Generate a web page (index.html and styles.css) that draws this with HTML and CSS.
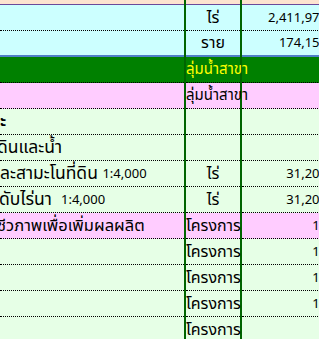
FILE: index.html
```html
<!DOCTYPE html>
<html lang="th">
<head>
<meta charset="utf-8">
<title>ตารางโครงการ</title>
<link rel="stylesheet" href="styles.css">
</head>
<body>
<div class="sheet">
  <div class="row r-top">
    <div class="cell c1"></div><div class="cell c2"></div><div class="cell c3"></div>
  </div>
  <div class="row r-cyan">
    <div class="cell c1"></div><div class="cell c2">ไร่</div><div class="cell c3">2,411,975</div>
  </div>
  <div class="row r-cyan r-cyan-last">
    <div class="cell c1"></div><div class="cell c2">ราย</div><div class="cell c3">174,150</div>
  </div>
  <div class="row r-green">
    <div class="cell c1"></div><div class="cell c2 left basin">ลุ่มน้ำสาขา</div><div class="cell c3"></div>
  </div>
  <div class="row r-pink">
    <div class="cell c1"></div><div class="cell c2 left basin">ลุ่มน้ำสาขา</div><div class="cell c3"></div>
  </div>
  <div class="row r-lite">
    <div class="cell c1 bold">ะ</div><div class="cell c2"></div><div class="cell c3"></div>
  </div>
  <div class="row r-lite">
    <div class="cell c1"><span class="cut">ดินและน้ำ</span></div><div class="cell c2"></div><div class="cell c3"></div>
  </div>
  <div class="row r-lite">
    <div class="cell c1">ละสามะโนที่ดิน&nbsp;<span class="num">1:4,000</span></div><div class="cell c2">ไร่</div><div class="cell c3">31,200</div>
  </div>
  <div class="row r-lite">
    <div class="cell c1"><span class="cut-sm">ดับไร่นา</span>&nbsp;&nbsp;<span class="num">1:4,000</span></div><div class="cell c2">ไร่</div><div class="cell c3">31,200</div>
  </div>
  <div class="row r-pink">
    <div class="cell c1 narrow"><span class="cut">ชีวภาพเพื่อเพิ่มผลผลิต</span></div><div class="cell c2 left">โครงการ</div><div class="cell c3">10</div>
  </div>
  <div class="row r-lite">
    <div class="cell c1"></div><div class="cell c2 left">โครงการ</div><div class="cell c3">10</div>
  </div>
  <div class="row r-lite">
    <div class="cell c1"></div><div class="cell c2 left">โครงการ</div><div class="cell c3">10</div>
  </div>
  <div class="row r-lite">
    <div class="cell c1"></div><div class="cell c2 left">โครงการ</div><div class="cell c3">10</div>
  </div>
  <div class="row r-lite">
    <div class="cell c1"></div><div class="cell c2 left">โครงการ</div><div class="cell c3"></div>
  </div>
</div>
</body>
</html>
```
FILE: styles.css
```css
html, body {
  margin: 0;
  padding: 0;
  overflow: hidden;
  background: #e6ffe6;
}
body {
  font-family: Tahoma, "Noto Sans Thai", "Noto Sans Thai UI", Loma, Garuda, "DejaVu Sans", sans-serif;
  font-size: 16px;
  color: #000;
}
.sheet {
  width: 330px;
  background: #006400;
}
.row {
  display: grid;
  grid-template-columns: 184px 54px 88px;
  column-gap: 2px;
  height: 26px;
}
.cell {
  box-sizing: border-box;
  border-bottom: 1px dotted #000;
  display: flex;
  align-items: flex-end;
  padding-bottom: 3px;
  white-space: nowrap;
  overflow: hidden;
  line-height: 18px;
}
.c1 { justify-content: flex-start; font-size: 17.5px; }
.c1.narrow { font-size: 16.5px; }
.c2 { justify-content: center; overflow: visible; }
.c2.left { justify-content: flex-start; }
.c2.basin { font-size: 15px; position: relative; z-index: 1; }
.c3 { justify-content: flex-end; padding-right: 3px; font-size: 13px; }
.num { font-size: 13px; }

.r-top { height: 5px; }
.r-top .cell { background: #fde3d0; border-bottom: 1px solid #6a4a9a; padding: 0; }

.r-cyan .cell { background: #ccffff; }
.r-cyan-last .cell { border-bottom: 2px solid #4f7fc8; }

.r-green .cell { background: #008000; color: #ffff00; }
.r-pink .cell { background: #ffccff; }
.r-lite .cell { background: #e6ffe6; }

.bold { font-weight: bold; }
.cut { margin-left: -3px; }
.cut-sm { margin-left: -1px; }
```
